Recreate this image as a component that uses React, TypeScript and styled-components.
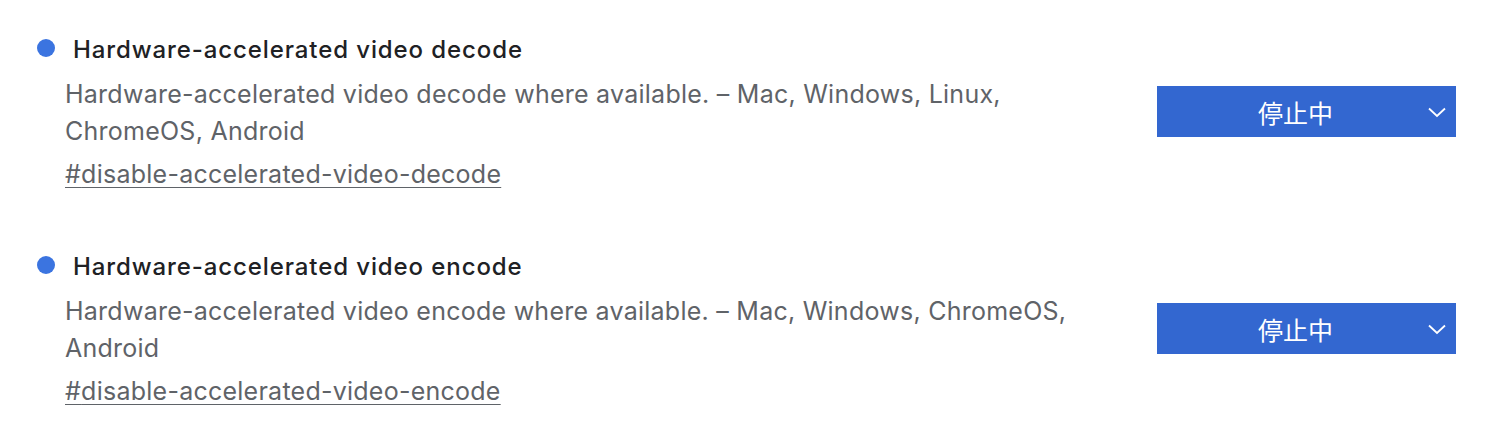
import styled, { createGlobalStyle } from 'styled-components'

const GlobalStyle = createGlobalStyle`
  html, body {
    margin: 0;
    padding: 0;
    background: #fff;
  }
  body {
    font-family: Inter, "Noto Sans CJK JP", sans-serif;
    -webkit-font-smoothing: antialiased;
  }
`

type Flag = {
  name: string
  description: string
  platforms: string
  id: string
}

const flags: Flag[] = [
  {
    name: 'Hardware-accelerated video decode',
    description: 'Hardware-accelerated video decode where available.',
    platforms: 'Mac, Windows, Linux, ChromeOS, Android',
    id: 'disable-accelerated-video-decode',
  },
  {
    name: 'Hardware-accelerated video encode',
    description: 'Hardware-accelerated video encode where available.',
    platforms: 'Mac, Windows, ChromeOS, Android',
    id: 'disable-accelerated-video-encode',
  },
]

const List = styled.div`
  display: flex;
  flex-direction: column;
  gap: 60px;
  padding: 35px 32px 0 37px;
`

const Experiment = styled.div`
  display: grid;
  grid-template-columns: 1fr 299px;
  column-gap: 40px;
`

const Body = styled.div`
  display: flex;
  flex-direction: column;
`

const TitleRow = styled.div`
  display: flex;
  align-items: center;
  gap: 18px;
  height: 30px;
`

const Dot = styled.span`
  width: 18px;
  height: 18px;
  border-radius: 50%;
  background: #3b74e0;
  flex: none;
  margin-top: -4px;
`

const Title = styled.h3`
  margin: 0;
  font-size: 24px;
  line-height: 30px;
  font-weight: 500;
  color: #202124;
  letter-spacing: 0.9px;
`

const Description = styled.p`
  margin: 11px 0 0 28px;
  font-size: 25px;
  line-height: 37px;
  color: #5f6368;
  letter-spacing: 0.25px;
  max-width: 1030px;
`

const Permalink = styled.a`
  margin: 6px 0 0 28px;
  font-size: 25px;
  line-height: 36px;
  color: #5f6368;
  letter-spacing: 0.25px;
  text-decoration: underline;
  text-decoration-thickness: 1px;
  text-underline-offset: 4px;
  align-self: flex-start;
`

const Select = styled.div`
  position: relative;
  height: 51px;
  margin-top: 51px;
  padding-right: 22px;
  background: #3367d0;
  color: #fff;
  display: flex;
  align-items: center;
  justify-content: center;
  font-size: 25px;
  font-family: "Noto Sans CJK JP", sans-serif;
  align-self: start;
`

const Chevron = styled.svg`
  position: absolute;
  right: 8px;
  top: 50%;
  transform: translateY(-50%);
`

export default function App() {
  return (
    <>
      <GlobalStyle />
      <List>
        {flags.map((f) => (
          <Experiment key={f.id}>
            <Body>
              <TitleRow>
                <Dot />
                <Title>{f.name}</Title>
              </TitleRow>
              <Description>
                {f.description} – {f.platforms}
              </Description>
              <Permalink href={`#${f.id}`}>#{f.id}</Permalink>
            </Body>
            <Select>
              停止中
              <Chevron width="22" height="14" viewBox="0 0 22 14">
                <path d="M3 3.5 L11 11 L19 3.5" fill="none" stroke="#fff" strokeWidth="1.8" />
              </Chevron>
            </Select>
          </Experiment>
        ))}
      </List>
    </>
  )
}
